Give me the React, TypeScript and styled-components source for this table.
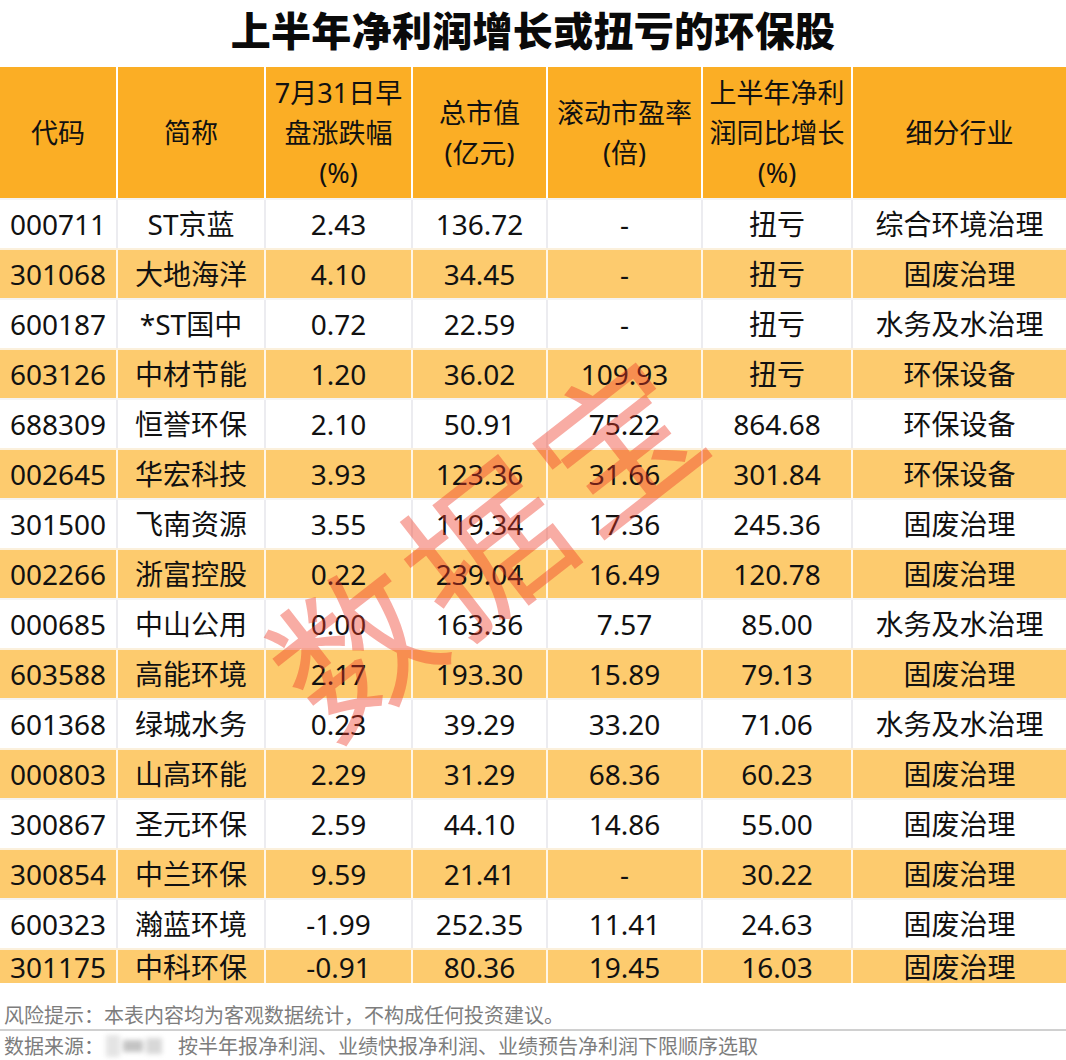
import React from "react";
import styled, { createGlobalStyle } from "styled-components";

const Global = createGlobalStyle`
  html, body { margin: 0; padding: 0; background: #ffffff; }
  body { font-family: "Noto Sans", "Noto Sans CJK SC", sans-serif; color: #111; }
`;

const COLS = "118px 148px 147px 135px 155px 150px 1fr";

const Page = styled.div`
  position: relative;
  width: 1066px;
  height: 1060px;
  overflow: hidden;
  background: #fff;
`;

const Title = styled.h1`
  margin: 0;
  height: 67px;
  padding-bottom: 10px;
  box-sizing: border-box;
  display: flex;
  align-items: center;
  justify-content: center;
  font-family: "Noto Sans CJK SC", sans-serif;
  font-weight: 900;
  font-size: 40px;
  letter-spacing: 0.3px;
  color: #0a0a0a;
`;

const Table = styled.div`
  display: flex;
  flex-direction: column;
`;

const HeadRow = styled.div`
  display: grid;
  grid-template-columns: ${COLS};
  height: 131px;
  background: #fbae25;
`;

const HeadCell = styled.div`
  display: flex;
  align-items: center;
  justify-content: center;
  text-align: center;
  font-family: "Noto Sans", "Noto Sans CJK SC", sans-serif;
  font-size: 27px;
  line-height: 40px;
  color: #111;
  border-right: 2px solid #fff;
  &:last-child { border-right: none; }
`;

const Row = styled.div<{ $striped: boolean; $short?: boolean }>`
  display: grid;
  grid-template-columns: ${COLS};
  height: ${(p) => (p.$short ? "35px" : "50px")};
  background: ${(p) => (p.$striped ? "#fdcb6e" : "#ffffff")};
  border-top: 2px solid ${(p) => (p.$striped ? "#fbf0dc" : "#f4f4f4")};
  box-sizing: border-box;
`;

const Cell = styled.div<{ $striped: boolean }>`
  display: flex;
  align-items: center;
  justify-content: center;
  white-space: nowrap;
  font-size: 28px;
  line-height: 30px;
  color: #111;
  border-right: 2px solid ${(p) => (p.$striped ? "#fff6e6" : "#ececf0")};
  &:last-child { border-right: none; }
`;

const Watermark = styled.div`
  position: absolute;
  left: 484px;
  top: 538px;
  transform: translate(-50%, -50%) rotate(-38deg);
  font-family: "Noto Sans CJK SC", sans-serif;
  font-weight: 400;
  font-size: 158px;
  letter-spacing: 8px;
  line-height: 1;
  white-space: nowrap;
  color: rgba(238, 57, 37, 0.42);
  pointer-events: none;
`;

const Footer = styled.div`
  display: flex;
  flex-direction: column;
  margin-top: 17px;
`;

const Note = styled.div<{ $divider?: boolean }>`
  display: flex;
  align-items: center;
  height: 29px;
  padding-left: 4px;
  font-family: "Noto Sans CJK SC", sans-serif;
  font-size: 20px;
  color: #7d7d7d;
  border-bottom: ${(p) => (p.$divider ? "2px solid #d0d0d0" : "none")};
`;

const Blur = styled.span`
  display: inline-flex;
  align-items: center;
  gap: 3px;
  width: 58px;
  height: 28px;
  margin: 0 14px 0 2px;
  filter: blur(2.5px);
`;

const BlurBit = styled.span<{ $w: number; $h: number; $c: string }>`
  display: block;
  width: ${(p) => p.$w}px;
  height: ${(p) => p.$h}px;
  background: ${(p) => p.$c};
`;

const header: React.ReactNode[] = [
  "代码",
  "简称",
  <>7月31日早<br />盘涨跌幅<br />(%)</>,
  <>总市值<br />(亿元)</>,
  <>滚动市盈率<br />(倍)</>,
  <>上半年净利<br />润同比增长<br />(%)</>,
  "细分行业",
];

const rows: string[][] = [
  ["000711", "ST京蓝", "2.43", "136.72", "-", "扭亏", "综合环境治理"],
  ["301068", "大地海洋", "4.10", "34.45", "-", "扭亏", "固废治理"],
  ["600187", "*ST国中", "0.72", "22.59", "-", "扭亏", "水务及水治理"],
  ["603126", "中材节能", "1.20", "36.02", "109.93", "扭亏", "环保设备"],
  ["688309", "恒誉环保", "2.10", "50.91", "75.22", "864.68", "环保设备"],
  ["002645", "华宏科技", "3.93", "123.36", "31.66", "301.84", "环保设备"],
  ["301500", "飞南资源", "3.55", "119.34", "17.36", "245.36", "固废治理"],
  ["002266", "浙富控股", "0.22", "239.04", "16.49", "120.78", "固废治理"],
  ["000685", "中山公用", "0.00", "163.36", "7.57", "85.00", "水务及水治理"],
  ["603588", "高能环境", "2.17", "193.30", "15.89", "79.13", "固废治理"],
  ["601368", "绿城水务", "0.23", "39.29", "33.20", "71.06", "水务及水治理"],
  ["000803", "山高环能", "2.29", "31.29", "68.36", "60.23", "固废治理"],
  ["300867", "圣元环保", "2.59", "44.10", "14.86", "55.00", "固废治理"],
  ["300854", "中兰环保", "9.59", "21.41", "-", "30.22", "固废治理"],
  ["600323", "瀚蓝环境", "-1.99", "252.35", "11.41", "24.63", "固废治理"],
  ["301175", "中科环保", "-0.91", "80.36", "19.45", "16.03", "固废治理"],
];

export default function App() {
  return (
    <>
      <Global />
      <Page>
        <Title>上半年净利润增长或扭亏的环保股</Title>
        <Table>
          <HeadRow>
            {header.map((h, i) => (
              <HeadCell key={i}>{h}</HeadCell>
            ))}
          </HeadRow>
          {rows.map((r, i) => {
            const striped = i % 2 === 1;
            return (
              <Row key={r[0]} $striped={striped} $short={i === rows.length - 1}>
                {r.map((c, j) => (
                  <Cell key={j} $striped={striped}>
                    {c}
                  </Cell>
                ))}
              </Row>
            );
          })}
        </Table>
        <Footer>
          <Note $divider>风险提示：本表内容均为客观数据统计，不构成任何投资建议。</Note>
          <Note>
            数据来源：
            <Blur>
              <BlurBit $w={14} $h={22} $c="#e4e4e4" />
              <BlurBit $w={20} $h={12} $c="#c4c4c4" />
              <BlurBit $w={16} $h={16} $c="#d8d8d8" />
            </Blur>
            按半年报净利润、业绩快报净利润、业绩预告净利润下限顺序选取
          </Note>
        </Footer>
        <Watermark>数据宝</Watermark>
      </Page>
    </>
  );
}
